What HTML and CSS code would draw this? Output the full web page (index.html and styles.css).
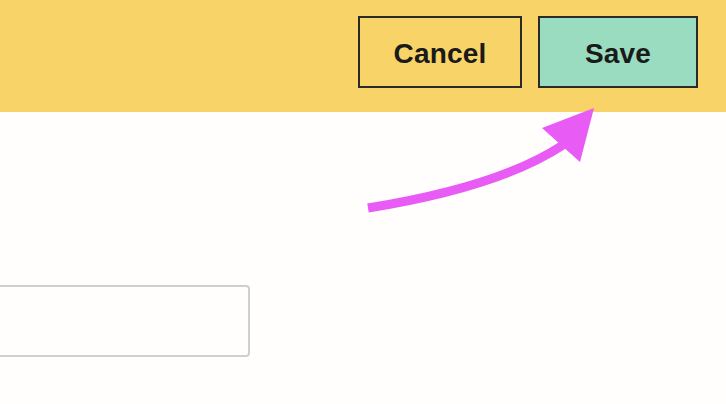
FILE: index.html
```html
<!DOCTYPE html>
<html lang="en">
<head>
	<meta charset="UTF-8">
	<title>Edit</title>
	<link rel="stylesheet" href="styles.css">
</head>
<body>
	<div id="toolbar">
		<a href="javascript:;" class="btn" id="cancel">Cancel</a>
		<a href="javascript:;" class="btn" id="save">Save</a>
	</div>

	<div id="content">
		<input type="text" class="field">
	</div>

	<!-- 指向保存按钮的箭头 -->
	<svg id="pointer" width="726" height="404" viewBox="0 0 726 404">
		<path d="M368 208 C430 198, 510 180, 563 145" fill="none" stroke="#e85cf5" stroke-width="9"/>
		<polygon points="594,108 542,128 580,162" fill="#e85cf5"/>
	</svg>
</body>
</html>
```

FILE: styles.css
```css
* {
    margin: 0;
    padding: 0;
    box-sizing: border-box;
    text-decoration: none;
}

body {
    position: relative;
    width: 726px;
    height: 404px;
    overflow: hidden;
    background: #fffefd;
    font-family: "Liberation Sans", Arial, sans-serif;
}

#toolbar {
    display: flex;
    justify-content: flex-end;
    align-items: flex-start;
    gap: 16px;
    height: 112px;
    padding: 16px 28px 0 0;
    background: #f8d468;
}

.btn {
    display: flex;
    align-items: center;
    justify-content: center;
    height: 72px;
    padding-top: 3px;
    border: 2px solid #2a2a2a;
    font-size: 28px;
    font-weight: bold;
    color: #1a1a1a;
    letter-spacing: 0.2px;
}

#cancel {
    width: 164px;
    background: #f8d468;
}

#save {
    width: 160px;
    background: #99dcbf;
}

#content {
    padding-top: 173px;
}

.field {
    display: block;
    width: 280px;
    height: 72px;
    margin-left: -30px;
    border: 2px solid #cfcfcf;
    border-radius: 4px;
    background: #fffefd;
    outline: none;
}

#pointer {
    position: absolute;
    left: 0;
    top: 0;
    pointer-events: none;
}
```
